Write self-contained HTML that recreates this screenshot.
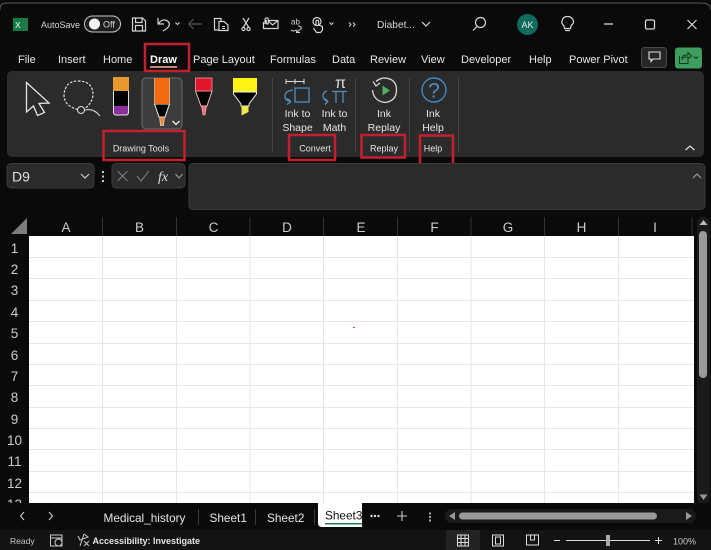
<!DOCTYPE html>
<html>
<head>
<meta charset="utf-8">
<style>
html,body{margin:0;padding:0;background:#0a0a0a;}
body{width:711px;height:550px;overflow:hidden;position:relative;font-family:"Liberation Sans",sans-serif;}
svg{position:absolute;left:0;top:0;}
text{font-family:"Liberation Sans",sans-serif;fill:#e6e6e6;}
</style>
</head>
<body>
<svg width="711" height="550" viewBox="0 0 711 550" xmlns="http://www.w3.org/2000/svg">
<rect width="711" height="550" fill="#0a0a0a"/>
<path d="M0 10V8Q0 3 8 3H700Q711 3 711 10" fill="none" stroke="#5a5a5a" stroke-width="1"/>

<!-- title bar -->
<rect x="13" y="18" width="15" height="13" rx="1" fill="#1d7a45"/>
<rect x="13" y="18" width="9" height="13" fill="#107c41"/>
<text x="15" y="28" font-size="8.500" style="fill:#fff">X</text>
<text x="41" y="28" font-size="9" style="fill:#d8d8d8">AutoSave</text>
<rect x="84.500" y="16" width="36" height="16" rx="8" fill="#1c1c1c" stroke="#c8c8c8" stroke-width="1"/>
<circle cx="94.500" cy="24" r="5.500" fill="#f2f2f2"/>
<text x="103" y="27.500" font-size="9" style="fill:#d8d8d8">Off</text>
<g fill="none" stroke="#d4d4d4" stroke-width="1.200">
<path d="M132.500 18H142.500L145.500 21V31H132.500Z"/><path d="M135.500 18V22.500H142V18M135.500 31V25.500H142.500V31"/>
<path d="M158 18V24H164M158.500 24Q161 19.500 165 20Q170.500 21.500 169 26Q168 28 163 31"/>
<path d="M175.500 22.500L177.500 24.500L179.500 22.500" stroke-width="1"/>
<path d="M188.500 24H202M188.500 24L193.500 19M188.500 24L193.500 29" stroke="#555"/>
<path d="M219 30H214.500V18.500H221V21.500"/><path d="M219 21.500H224L228 25V30.500H219Z"/><path d="M222 26.500H225M222 28.500H225" stroke-width=".9"/>
<path d="M243 18L248.500 27M249 18L243.500 27"/><circle cx="243.500" cy="29" r="1.600"/><circle cx="248.500" cy="29" r="1.600"/>
<path d="M268 20.500H278V28.500H263.500V22M268 20.500L272.500 25L278 20.500"/><path d="M265 24V19.500a1.600 1.600 0 0 1 3.200 0V23a1 1 0 0 1-2 0V20"/>
<path d="M291 30Q293 32 296 30M298 26Q302 26 301 29L297 32M297 29.500L296.500 32.500L300 32.500" stroke-width="1"/>
<path d="M316 26V21.500a1.300 1.300 0 0 1 2.600 0V25L322.500 26.500V30L320.500 32.500H316.500L313.500 28"/><circle cx="317" cy="21.500" r="4"/>
<path d="M329.500 22.500L331.500 24.500L333.500 22.500" stroke-width="1"/>
<path d="M349 22.500L351 24.500L349 26.500M353 22.500L355 24.500L353 26.500" stroke-width="1"/>
</g>
<text x="291" y="24.500" font-size="8" style="fill:#d4d4d4">ab</text>
<text x="377" y="28" font-size="10.200" style="fill:#d8d8d8">Diabet...</text>
<path d="M422 22L426 26L430 22" fill="none" stroke="#d8d8d8" stroke-width="1.200"/>
<circle cx="480.500" cy="22.500" r="5" fill="none" stroke="#d8d8d8" stroke-width="1.200"/>
<path d="M477 26.500L473 30.500" stroke="#d8d8d8" stroke-width="1.200"/>
<circle cx="527.500" cy="24.500" r="10.500" fill="#0f6b5c"/>
<text x="527.500" y="28" font-size="9" text-anchor="middle" style="fill:#e8e8e8">AK</text>
<path d="M564 26Q561 23 562 21Q563 16.500 567.500 16.500Q572 16.500 573.500 21Q574 23 571 26L570.500 28.500H564.500Z" fill="none" stroke="#d8d8d8" stroke-width="1.200"/>
<path d="M565 30.500H570" stroke="#d8d8d8" stroke-width="1.200"/>
<path d="M604 24H613" stroke="#d8d8d8" stroke-width="1.300"/>
<rect x="645.500" y="20" width="9" height="9" rx="1.500" fill="none" stroke="#d8d8d8" stroke-width="1.300"/>
<path d="M687.500 20L696.500 29M696.500 20L687.500 29" stroke="#d8d8d8" stroke-width="1.200"/>

<!-- tabs -->
<g font-size="11">
<text x="18" y="63">File</text><text x="58" y="63">Insert</text><text x="103" y="63">Home</text>
<text x="150" y="63" style="fill:#fff;font-weight:bold">Draw</text>
<text x="193" y="63">Page Layout</text><text x="270" y="63">Formulas</text><text x="332" y="63">Data</text>
<text x="370" y="63">Review</text><text x="421" y="63">View</text><text x="461" y="63">Developer</text>
<text x="529" y="63">Help</text><text x="569" y="63">Power Pivot</text>
</g>
<rect x="150" y="66" width="27" height="2" fill="#b98a80"/>
<rect x="641.500" y="47.500" width="25" height="20" rx="3" fill="#262626" stroke="#4a4a4a"/>
<path d="M649 52H660V59H653L651 61.500V59H649Z" fill="none" stroke="#e0e0e0" stroke-width="1.100"/>
<rect x="675" y="47.500" width="27" height="21" rx="3" fill="#3f9e5f"/>
<path d="M679.500 56V63.500H688V60M682 59Q682 55 686 55H688V52.500L691.500 56L688 59V57H686Q684 57 682 59Z" fill="none" stroke="#123a22" stroke-width="1"/>
<path d="M694 56.500L696 58.500L698 56.500" fill="none" stroke="#123a22" stroke-width="1.100"/>

<!-- ribbon -->
<rect x="7" y="71" width="697" height="86" rx="5" fill="#2b2b2b"/>
<!-- cursor -->
<path d="M26.500 82.500L49 103L39 103.500L44.500 112.500L37.500 115.500L33.500 106L26.500 112Z" fill="#2b2b2b" stroke="#e4e4e4" stroke-width="1.300"/>
<!-- lasso -->
<path d="M78 109.500Q64 106 64 95Q65 81 78 81Q93 81 93 95Q92 104 84 109" fill="none" stroke="#e0e0e0" stroke-width="1.200" stroke-dasharray="2.500 1.500"/>
<circle cx="81" cy="110" r="3.500" fill="none" stroke="#e0e0e0" stroke-width="1"/>
<path d="M85 110Q94 108 100 116" fill="none" stroke="#e0e0e0" stroke-width="1"/>
<!-- eraser -->
<rect x="113" y="77" width="16" height="14" fill="#e69a2e"/>
<rect x="113" y="91" width="16" height="15" fill="#000"/>
<path d="M113 106H129V112Q129 115 126 115H116Q113 115 113 112Z" fill="#8a2f9e"/>
<path d="M113.500 91V112Q113.500 115 116 115H126Q128.500 115 128.500 112V91" fill="none" stroke="#e6dfd8" stroke-width="1"/>
<!-- selected pen -->
<rect x="142" y="78" width="40" height="51" rx="4" fill="#3d3d3d" stroke="#6a6a6a"/>
<path d="M154.500 104L159 117H165L169.500 104Z" fill="#000" stroke="#eee" stroke-width="1"/>
<path d="M154.500 78H169.500V104H154.500Z" fill="#f26a12"/>
<path d="M154.500 78V104M169.500 78V104" stroke="#e8c8b0" stroke-width=".7"/>
<path d="M159.500 117H164.500L163.500 125.500H160.500Z" fill="#f0852e" stroke="#ddd" stroke-width=".7"/>
<path d="M172.500 121L176 124.500L179.500 121" fill="none" stroke="#f0f0f0" stroke-width="1.300"/>
<!-- red pen -->
<path d="M195.500 91L201 106H207L212 91Z" fill="#000" stroke="#eeb6b6" stroke-width="1"/>
<rect x="195.500" y="78" width="16.500" height="13" fill="#e3152b" stroke="#e89a9a" stroke-width=".8"/>
<path d="M201.500 106H206.500L205 115H203Z" fill="#ee6f75" stroke="#eec0c0" stroke-width=".6"/>
<!-- highlighter -->
<rect x="233" y="78" width="24" height="14" fill="#fdf413"/>
<path d="M233.500 92H256.500V94L249 104V106H241V104L233.500 94Z" fill="#000" stroke="#eee" stroke-width="1"/>
<path d="M241.500 106H248.500V112L241.500 115.500Z" fill="#efe84e"/>

<path d="M272.500 78V152M355.500 78V152M409.500 78V152M458.500 78V152" stroke="#444" stroke-width="1"/>

<!-- ink to shape -->
<g fill="none" stroke="#4a90c4" stroke-width="1.300">
<rect x="295" y="88" width="14" height="14"/>
<path d="M293 90Q285 91 285 96Q285 101 291 101.500M291 101.500L287 98.500M291 101.500L287 104.500"/>
<path d="M327 91Q323 92 323 96Q323 100 328 101.500M328 101.500L325 98.500M328 101.500L325 104.500"/>
<path d="M332 91.500H347M336 91.500V103M343 91.500V103"/>
</g>
<path d="M286 81.500H304M286 79V84M295 79V84M304 79V84" stroke="#ddd" fill="none"/>
<text x="335" y="88" font-size="16" style="fill:#ddd">π</text>
<g font-size="10.500" text-anchor="middle">
<text x="297.500" y="117">Ink to</text><text x="297.500" y="131">Shape</text>
<text x="334.500" y="117">Ink to</text><text x="334.500" y="131">Math</text>
<text x="384" y="117">Ink</text><text x="384" y="131">Replay</text>
<text x="433" y="117">Ink</text><text x="433" y="131">Help</text>
</g>
<!-- replay -->
<path d="M376 81.500Q380 78 385 78Q396.500 79 396.500 90Q396.500 101 385 102.500Q373.500 101 372.500 90" fill="none" stroke="#d8d8d8" stroke-width="1.300"/>
<path d="M373 81.500L376 86L380 83" fill="none" stroke="#d8d8d8" stroke-width="1.200"/>
<path d="M382.500 85.500L390 90.500L382.500 95.500Z" fill="#4fb060"/>
<!-- help -->
<circle cx="434" cy="90" r="12" fill="none" stroke="#3f88c0" stroke-width="1.400"/>
<text x="434" y="97.500" font-size="21" text-anchor="middle" style="fill:#4a90c4">?</text>

<g font-size="9" text-anchor="middle">
<text x="141" y="151.500">Drawing Tools</text>
<text x="315" y="151.500">Convert</text>
<text x="384" y="151.500">Replay</text>
<text x="433" y="151.500">Help</text>
</g>
<path d="M685.500 150L690 146L694.500 150" fill="none" stroke="#e0e0e0" stroke-width="1.200"/>

<!-- red boxes -->
<g fill="none" stroke="#c3202d" stroke-width="2.500">
<rect x="145" y="44" width="44" height="27"/>
<rect x="103.500" y="131" width="81" height="29"/>
<rect x="289" y="135" width="46" height="25"/>
<rect x="361.500" y="135" width="43.500" height="22.500"/>
<rect x="420" y="135.500" width="33" height="30"/>
</g>

<!-- formula bar -->
<rect x="7" y="163.500" width="87" height="24.500" rx="4" fill="#2b2b2b" stroke="#3b3b3b"/>
<text x="12" y="181.500" font-size="14" style="fill:#e0e0e0">D9</text>
<path d="M81 174L85 178L89 174" fill="none" stroke="#ccc" stroke-width="1.200"/>
<g fill="#ccc"><rect x="102" y="171" width="2" height="2"/><rect x="102" y="175.500" width="2" height="2"/><rect x="102" y="180" width="2" height="2"/></g>
<rect x="112" y="163.500" width="73" height="24.500" rx="4" fill="#2b2b2b" stroke="#3b3b3b"/>
<path d="M117.500 171L127.500 181M127.500 171L117.500 181M137 176L141 181L149 171" fill="none" stroke="#7a7a7a" stroke-width="1.100"/>
<text x="158" y="181" font-size="14" style="font-family:'Liberation Serif',serif;font-style:italic;fill:#ddd">fx</text>
<path d="M175.500 174L179 178L182.500 174" fill="none" stroke="#999" stroke-width="1.100"/>
<rect x="189" y="163.500" width="516" height="46" rx="4" fill="#2b2b2b" stroke="#3b3b3b"/>
<path d="M693 178L697 174L701 178" fill="none" stroke="#999" stroke-width="1.200"/>

<!-- grid -->
<rect x="29" y="236" width="665" height="267" fill="#fff"/>
<g stroke="#e6e6e6" stroke-width="1">
<path d="M102.500 236V503M176.500 236V503M250 236V503M323.500 236V503M397.500 236V503M471 236V503M544.500 236V503M618.500 236V503"/>
<path d="M29 257.500H694M29 278.500H694M29 300.500H694M29 321.500H694M29 343.500H694M29 364.500H694M29 385.500H694M29 407.500H694M29 428.500H694M29 449.500H694M29 471.500H694M29 492.500H694"/>
</g>
<rect x="353" y="327" width="2" height="1" fill="#b55"/>
<path d="M27 218V234H11Z" fill="#7d7d7d"/>
<path d="M102.500 217V236M176.500 217V236M250 217V236M323.500 217V236M397.500 217V236M471 217V236M544.500 217V236M618.500 217V236M692 217V236" stroke="#333"/>
<g font-size="13.500" text-anchor="middle">
<text x="66" y="232" style="fill:#ccc">A</text><text x="139.500" y="232" style="fill:#ccc">B</text><text x="213.500" y="232" style="fill:#ccc">C</text><text x="287" y="232" style="fill:#ccc">D</text><text x="361" y="232" style="fill:#ccc">E</text><text x="434.500" y="232" style="fill:#ccc">F</text><text x="508" y="232" style="fill:#ccc">G</text><text x="581.500" y="232" style="fill:#ccc">H</text><text x="655" y="232" style="fill:#ccc">I</text>
</g>
<g font-size="13.500" text-anchor="middle">
<text x="14.500" y="253" style="fill:#ccc">1</text><text x="14.500" y="274" style="fill:#ccc">2</text><text x="14.500" y="295" style="fill:#ccc">3</text><text x="14.500" y="317" style="fill:#ccc">4</text><text x="14.500" y="338" style="fill:#ccc">5</text><text x="14.500" y="360" style="fill:#ccc">6</text><text x="14.500" y="381" style="fill:#ccc">7</text><text x="14.500" y="402" style="fill:#ccc">8</text><text x="14.500" y="424" style="fill:#ccc">9</text><text x="14.500" y="445" style="fill:#ccc">10</text><text x="14.500" y="466" style="fill:#ccc">11</text><text x="14.500" y="488" style="fill:#ccc">12</text><text x="14.500" y="509" style="fill:#ccc">13</text>
</g>
<!-- vertical scrollbar -->
<rect x="694" y="216" width="17" height="287" fill="#0a0a0a"/>
<rect x="697" y="217" width="13" height="287" rx="6" fill="#1a1a1a"/>
<path d="M699.500 225L703.500 220L707.500 225Z" fill="#bbb"/>
<rect x="699" y="231" width="8" height="147" rx="4" fill="#9a9a9a"/>
<path d="M699.500 494.500H707.500L703.500 500Z" fill="#999"/>

<!-- sheet bar -->
<path d="M0 503H711V530H0Z" fill="#0a0a0a"/>
<path d="M24 512L20.500 516L24 520M49 512L52.500 516L49 520" fill="none" stroke="#ccc" stroke-width="1.100"/>
<g font-size="11.800">
<text x="103.500" y="522">Medical_history</text><text x="209.500" y="522">Sheet1</text><text x="267" y="522">Sheet2</text>
</g>
<path d="M198.500 509V525M255.500 509V525M314.500 509V525" stroke="#3a3a3a"/>
<path d="M318 503H362V527H322Q318 527 318 523Z" fill="#fff"/>
<text x="325" y="519.500" font-size="11.800" style="fill:#111">Sheet3</text>
<rect x="325" y="523" width="37" height="1.500" fill="#1f7a4c"/>
<rect x="362" y="503" width="349" height="27" fill="#0a0a0a"/>
<g fill="#ddd"><circle cx="371.500" cy="516" r="1.200"/><circle cx="375" cy="516" r="1.200"/><circle cx="378.500" cy="516" r="1.200"/></g>
<path d="M402 511V521M397 516H407" stroke="#ccc" stroke-width="1.100"/>
<g fill="#aaa"><rect x="429" y="512.500" width="2" height="2"/><rect x="429" y="516" width="2" height="2"/><rect x="429" y="519.500" width="2" height="2"/></g>
<rect x="445" y="509" width="251" height="14" rx="7" fill="#1a1a1a"/>
<path d="M455 512V520L449 516Z" fill="#999"/>
<rect x="459" y="512.500" width="198" height="7" rx="3.500" fill="#9a9a9a"/>
<path d="M686 512V520L692 516Z" fill="#999"/>

<!-- status bar -->
<rect x="0" y="530" width="711" height="20" fill="#131313"/>
<text x="10" y="544" font-size="8.500" style="fill:#c8c8c8">Ready</text>
<g fill="none" stroke="#c8c8c8" stroke-width="1">
<path d="M50.500 535H62V546H50.500ZM50.500 538H62"/>
<circle cx="58.500" cy="542.500" r="3.500" fill="#131313"/>
<path d="M84 534L80 546M84 534L88 537L80 540L78 536M84 541L89 546M89 541L84 546"/>
</g>
<text x="92.500" y="544" font-size="9" style="fill:#e4e4e4;font-weight:bold">Accessibility: Investigate</text>
<rect x="446" y="530" width="34" height="20" fill="#232323"/>
<g fill="none" stroke="#ddd" stroke-width="1">
<path d="M457.500 535H468.500V546H457.500ZM461 535V546M465 535V546M457.500 538.500H468.500M457.500 542.500H468.500"/>
<rect x="492.500" y="535" width="11" height="11"/><rect x="495.500" y="537" width="5" height="7"/>
<path d="M526.500 535H538.500V545H526.500ZM530.500 535V540H534.500V535"/>
<path d="M554 540.500H560M566 540.500H650M655 540.500H662M658.500 537V544" />
</g>
<rect x="606" y="535" width="4" height="11" fill="#aaa"/>
<text x="673" y="544.500" font-size="9" style="fill:#c8c8c8">100%</text>
</svg>
</body>
</html>
